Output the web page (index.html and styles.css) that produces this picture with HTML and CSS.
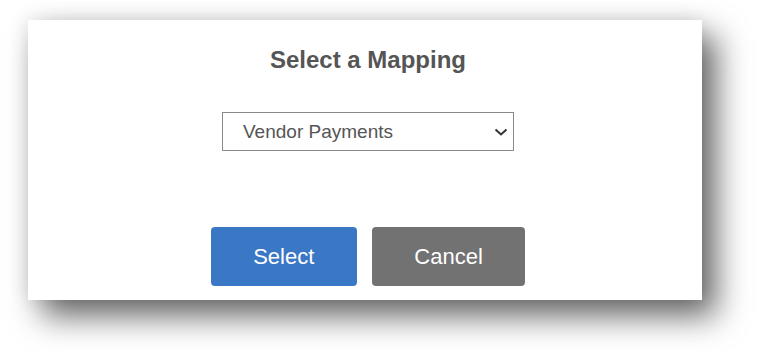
FILE: index.html
```html
<!DOCTYPE html>
<html lang="en">
<head>
<meta charset="utf-8">
<title>Select a Mapping</title>
<link rel="stylesheet" href="styles.css">
</head>
<body>
<div class="dialog">
  <h1 class="title">Select a Mapping</h1>
  <div class="select-wrap">
    <select class="select">
      <option>Vendor Payments</option>
    </select>
    <svg class="chevron" width="14" height="8" viewBox="0 0 14 8" aria-hidden="true">
      <path d="M1.5 1.5 L7 6.5 L12.5 1.5" fill="none" stroke="#333" stroke-width="2"/>
    </svg>
  </div>
  <div class="actions">
    <button class="btn btn-primary">Select</button>
    <button class="btn btn-secondary">Cancel</button>
  </div>
</div>
</body>
</html>
```

FILE: styles.css
```css
html, body {
  margin: 0;
  background: #ffffff;
}
body {
  box-sizing: border-box;
  width: 757px;
  height: 352px;
  overflow: hidden;
  padding: 20px 0 0 28px;
  font-family: "Liberation Sans", Arial, sans-serif;
}
.dialog {
  box-sizing: border-box;
  width: 674px;
  height: 280px;
  background: #ffffff;
  box-shadow: 14px 16px 30px rgba(0, 0, 0, 0.6), -2px -2px 18px rgba(0, 0, 0, 0.09);
  display: flex;
  flex-direction: column;
  align-items: center;
  padding: 26px 0 0 6px;
}
.title {
  margin: 0;
  font-size: 24px;
  line-height: 28px;
  font-weight: bold;
  color: #555555;
}
.select-wrap {
  position: relative;
  margin-top: 38px;
  width: 292px;
  height: 39px;
}
.select {
  appearance: none;
  -webkit-appearance: none;
  box-sizing: border-box;
  width: 100%;
  height: 100%;
  margin: 0;
  border: 1px solid #8a8a8a;
  border-radius: 0;
  background: #ffffff;
  padding: 0 0 0 20px;
  font-family: "Liberation Sans", Arial, sans-serif;
  font-size: 19px;
  color: #555555;
  outline: none;
}
.chevron {
  position: absolute;
  right: 6px;
  top: 16px;
  pointer-events: none;
}
.actions {
  margin-top: 76px;
  display: flex;
  gap: 15px;
}
.btn {
  height: 59px;
  border: none;
  border-radius: 4px;
  padding: 0 42.5px;
  font-family: "Liberation Sans", Arial, sans-serif;
  font-size: 22px;
  color: #ffffff;
}
.btn-primary {
  background: #3a77c4;
}
.btn-secondary {
  background: #727272;
}
```
